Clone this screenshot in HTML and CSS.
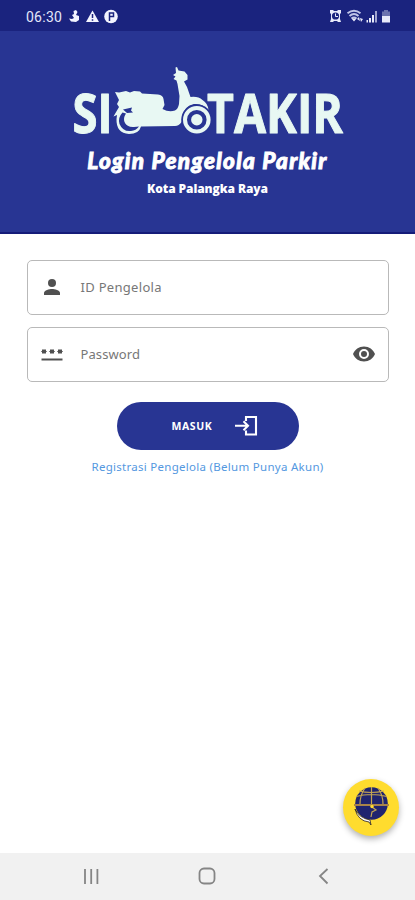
FILE: index.html
```
<!DOCTYPE html>
<html lang="id">
<head>
<meta charset="utf-8">
<meta name="viewport" content="width=device-width, initial-scale=1">
<title>Login Pengelola Parkir</title>
<link rel="stylesheet" href="styles.css">
</head>
<body>
<div class="app">
  <div class="status">
    <span class="time">06:30</span>
    <svg class="status-left" width="50" height="16" viewBox="68 9 50 16" fill="#f3f4ff">
      <path d="M73.500 11l2.500-1 1.500 2-1.500 3 3 1v4l-3 2-5-.5-2-3 3 .5 2-1-2-3 2-1z"/>
      <path d="M92.500 10.500l6.500 11.500H86z"/><path d="M92.500 14v4M92.500 19.300v1.500" stroke="#1a237e" stroke-width="1.500"/>
      <circle cx="111" cy="16.500" r="6.800"/><path d="M109.500 21v-8h4v3.500h-4" fill="none" stroke="#1a237e" stroke-width="1.500"/>
    </svg>
    <svg class="status-right" width="64" height="16" viewBox="328 9 64 16" fill="#e8eafa">
      <path d="M330 10h3l1 1h3l1-1h3v3l-1 1v5l1 3h-3l-1-1h-3l-1 1h-3l1-3v-5l-1-1z"/>
      <circle cx="335.500" cy="16" r="3.600" fill="#1a237e"/><path d="M335.500 13.500v3h2.500" stroke="#e8eafa" fill="none"/>
      <path d="M347.500 13.300q6.500-5 13 0M349.500 16q4.500-4 9 0M351.500 18.500q2.500-2 5 0" fill="none" stroke="#bfc4e8" stroke-width="2"/>
      <path d="M351.500 18.500h5L354 21.500zM357 19l2-2 1 4zM360 18l3 1-2 3z"/>
      <path d="M366.500 20h1.500v2.500h-1.500zM369 18h2v4.500h-2zM372 15h2v7.500h-2z"/><path d="M375 11h2v11.500h-2z" opacity=".65"/>
      <path d="M384 10h4v1.500h2V16h-8v-4.500h2z" opacity=".4"/><path d="M382 16h8v6.500h-8z"/>
    </svg>
  </div>
  <header class="hero">
    <svg class="logo" width="275" height="92" viewBox="70 56 275 92" fill="#e8f8f3">
      <text class="wordmark" x="72.500" y="133" textLength="40" lengthAdjust="spacingAndGlyphs">SI</text>
      <text class="wordmark" x="207" y="133" textLength="136" lengthAdjust="spacingAndGlyphs">TAKIR</text>
      <path d="M115 92L119 92.500 126 91 130 92.500 134 91 140 91.500 142 93.500 158 94.500Q163 95 163.500 99L164.500 105 162.500 109Q169 112.500 175 110.500 178 109 179 104L179.500 96 177.500 84 176.500 80.500 173.500 79 175.500 76.500 173 75 176 73 175.500 67.500 177 67 178.500 70.500 184.500 71.500 187.500 75V79.500L184 81.500 187 87 190.500 97 Q198 96 202.500 100 208 103.500 208.500 110 202 103 194 104 184 106 182 117L181.500 122 Q179 126 175 126L141 126.500 Q139 134 129 134 116 133 116.500 119L117 115 113.500 116.500 119 107 117 104 119 100z"/>
      <path d="M123 109.500L132 107.500 131 110.500 133 112.500 127 113z" fill="#283593"/>
      <path d="M122.500 112.500Q117.500 118 119.500 124 123 132 131 131 136 130.500 139 126.500L134 127Q127 127.500 124.500 122 123 118 126 113.500z" fill="#283593"/>
      <path d="M126 116Q123.500 121 126.500 124.500L133 126Q129 121 130 115z"/>
      <circle cx="196.800" cy="119.700" r="15.500" fill="#283593"/>
      <circle cx="196.800" cy="119.700" r="11.800" fill="none" stroke="#e8f8f3" stroke-width="4"/>
      <circle cx="196.800" cy="119.700" r="5.700"/>
    </svg>
    <h1>Login Pengelola Parkir</h1>
    <h2>Kota Palangka Raya</h2>
  </header>
  <main>
    <div class="field">
      <svg width="24" height="24" viewBox="0 0 24 24" fill="#505050"><circle cx="12" cy="8" r="4"/><path d="M4 20v-2c0-2.700 5.300-4 8-4s8 1.300 8 4v2z"/></svg>
      <span class="id-label">ID Pengelola</span>
    </div>
    <div class="field">
      <svg width="24" height="24" viewBox="0 0 24 24" fill="#505050"><path d="M1.500 16.500h21v2h-21z"/><path d="M2 7.500h4v4H2zM10 7.500h4v4h-4zM18 7.500h4v4h-4z"/><path d="M1.300 9.500h5.400M9.300 9.500h5.400M17.300 9.500h5.400" stroke="#505050" stroke-width="1.200"/></svg>
      <span class="pw-label">Password</span>
      <svg class="eye" width="24" height="24" viewBox="0 0 24 24" fill="#505050"><path d="M12 4.500C7 4.500 2.700 7.600 1 12c1.700 4.400 6 7.500 11 7.500s9.300-3.100 11-7.500c-1.700-4.400-6-7.500-11-7.500zM12 17a5 5 0 1 1 0-10 5 5 0 0 1 0 10zm0-8a3 3 0 1 0 0 6 3 3 0 0 0 0-6z"/></svg>
    </div>
    <div class="submit">
      <span>MASUK</span>
      <svg width="24" height="24" viewBox="0 0 24 24" fill="none" stroke="#fff" stroke-width="2.100"><path d="M11 7V3h10v17.500H11v-4M0 11.800h13M8.500 7.300l4.500 4.500-4.500 4.500"/></svg>
    </div>
    <a class="register">Registrasi Pengelola (Belum Punya Akun)</a>
  </main>
  <div class="fab">
    <svg width="36" height="42" viewBox="353 785 36 42">
      <circle cx="371.500" cy="803.500" r="16.300" fill="#20246f"/>
      <path d="M356 796.500q15-4 31 0M359 791q12 3 25 0M371.500 787v17M365 788q-5 7-5 16M378 788q5 7 5 16" fill="none" stroke="#c4a553" stroke-width="1.200"/>
      <path d="M354 805h35" stroke="#a98349" stroke-width="1.800"/>
      <path d="M372 807l4 3-4 2-1 5" fill="none" stroke="#c4a553" stroke-width="1.200"/>
      <path d="M355 809q4 9 15 11l1 5-2-3q-11-1-14-13z" fill="#fff" stroke="#28201f" stroke-width=".8"/>
      <circle cx="372" cy="806.500" r="1.700" fill="#ffdc32"/>
    </svg>
  </div>
  <nav>
    <svg width="415" height="47" viewBox="0 853 415 47" fill="none" stroke="#858585" stroke-width="1.800">
      <path d="M85 869v15M91.200 869v15M97.400 869v15"/>
      <rect x="199.500" y="868.500" width="15" height="15" rx="4.500"/>
      <path d="M327.500 869l-7.500 7 7.500 7.500"/>
    </svg>
  </nav>
</div>
</body>
</html>
```
FILE: styles.css
```
* { box-sizing: border-box; }
body { margin: 0; background: #fff; font-family: "Noto Sans", sans-serif; }
.app { width: 415px; height: 900px; display: flex; flex-direction: column; position: relative; overflow: hidden; }
.status { height: 31px; flex: none; background: #1a237e; display: flex; align-items: flex-start; padding: 9px 23px 0 26px; }
.time { width: 42px; font: 14px/16px Roboto, sans-serif; letter-spacing: .25px; color: #e4e6fa; }
.status-right { margin-left: auto; }
.hero { height: 203px; flex: none; background: #283593; border-bottom: 2px solid #151c79; display: flex; flex-direction: column; align-items: center; padding-top: 25px; color: #fff; }
.logo { display: block; flex: none; overflow: visible; }
.wordmark { font: 700 53px "Open Sans", sans-serif; stroke: #e8f8f3; stroke-width: 1px; stroke-linejoin: round; }
h1 { margin: -1px 0 0; font: italic 900 22.5px/28px Lato, sans-serif; letter-spacing: 1.3px; -webkit-text-stroke: .9px #fff; white-space: nowrap; }
h2 { margin: 5px 0 0; font: 800 12px/18px "Open Sans", sans-serif; letter-spacing: -.1px; white-space: nowrap; }
main { flex: 1; display: flex; flex-direction: column; align-items: center; padding-top: 26px; }
.field { width: 362px; height: 55px; margin-bottom: 12px; border: 1px solid #b9b9b9; border-radius: 5px; display: flex; align-items: center; padding: 0 12px; color: #777; font-size: 13px; line-height: 20px; }
.field svg { position: relative; top: -1px; }
.field span { margin: 0 0 1px 17px; }
.id-label { letter-spacing: .3px; }
.pw-label { letter-spacing: .1px; }
.eye { margin-left: auto; }
.submit { width: 182px; height: 48px; margin-top: 8px; border-radius: 24px; background: #283593; display: flex; align-items: center; justify-content: space-between; padding: 0 40px 0 55px; color: #fff; font-size: 10.5px; font-weight: 700; letter-spacing: .6px; }
.register { margin-top: 8px; font-size: 11.5px; line-height: 18px; letter-spacing: .28px; color: #5498df; white-space: nowrap; }
.fab { position: absolute; left: 343px; top: 779px; width: 56px; height: 57px; border-radius: 50%; background: #ffdc2e; box-shadow: 0 3px 6px rgba(0,0,0,.3); display: flex; justify-content: center; padding-top: 6px; }
nav { height: 47px; flex: none; background: #f1f1f1; }
nav svg { display: block; }
```
